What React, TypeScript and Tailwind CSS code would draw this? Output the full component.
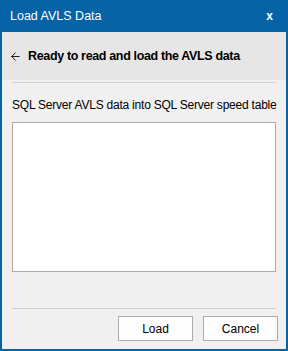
import { ArrowLeft } from "lucide-react";

export default function App() {
  return (
    <div
      className="w-[288px] h-[351px] flex flex-col bg-[#0563a6] text-[#000] overflow-hidden"
      style={{ fontFamily: '"Liberation Sans", Arial, sans-serif' }}
    >
      {/* title bar */}
      <div className="h-[32px] flex items-center justify-between pl-[10px] pr-[15px] text-white text-[12.5px] shrink-0">
        <span>Load AVLS Data</span>
        <span className="text-[12px] font-bold">x</span>
      </div>

      {/* window body */}
      <div className="flex-1 ml-[2px] mr-[2px] mb-[2px] bg-[#f0f0f0] flex flex-col">
        <div className="h-[48px] bg-[#e6e6e6] flex items-center pl-[7px] gap-[6px] whitespace-nowrap">
          <ArrowLeft className="w-[13px] h-[13px]" strokeWidth={1.6} />
          <span className="text-[12.5px] font-bold tracking-[-0.35px]">
            Ready to read and load the AVLS data
          </span>
        </div>
        <div className="mx-[10px] mt-[2px] h-px bg-[#cfcfcf]" />

        <div className="px-[10px] pt-[14px] flex flex-col">
          <p className="text-[12px] leading-[16px] tracking-[-0.22px] whitespace-nowrap">
            SQL Server AVLS data into SQL Server speed table
          </p>
          <div className="mt-[9px] h-[150px] bg-white border border-[#ababab]" />
        </div>

        <div className="mx-[10px] mt-[36px] h-px bg-[#cfcfcf]" />

        <div className="flex justify-end gap-[10px] pr-[8px] mt-[7px]">
          <button className="w-[75px] h-[25px] bg-[#fdfdfd] border border-[#adadad] text-[12px]">
            Load
          </button>
          <button className="w-[75px] h-[25px] bg-[#fdfdfd] border border-[#adadad] text-[12px]">
            Cancel
          </button>
        </div>
      </div>
    </div>
  );
}
